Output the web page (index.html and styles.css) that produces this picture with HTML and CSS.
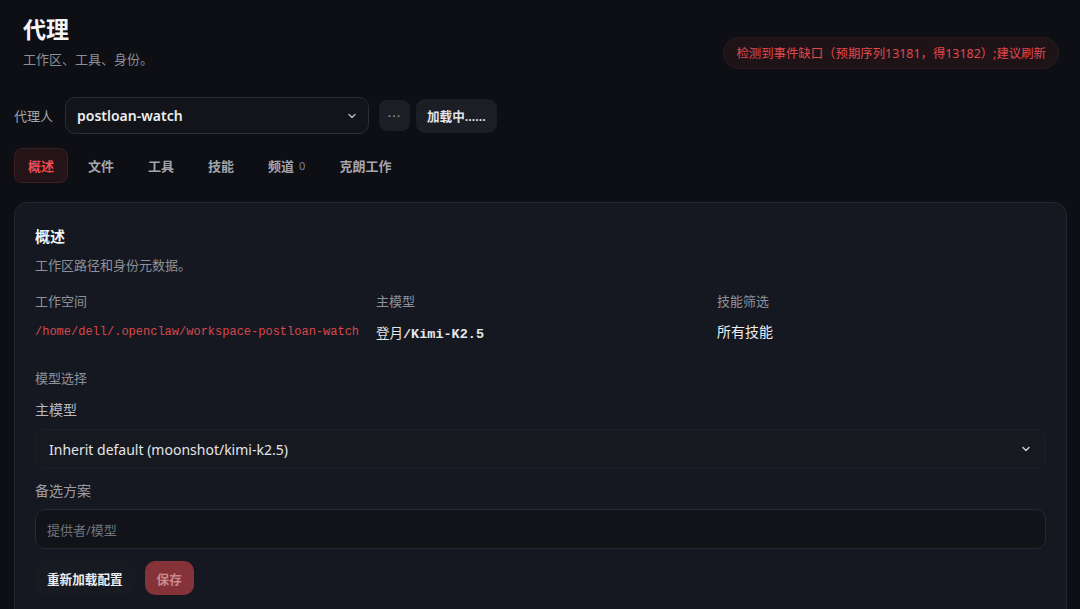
FILE: index.html
```html
<!DOCTYPE html>
<html lang="zh">
<head>
<meta charset="utf-8">
<link rel="stylesheet" href="styles.css">
</head>
<body>
<div class="page">
  <header class="head">
    <div class="head-text">
      <h1 class="title">代理</h1>
      <p class="subtitle">工作区、工具、身份。</p>
    </div>
    <div class="alert">检测到事件缺口（预期序列13181，得13182）;建议刷新</div>
  </header>

  <div class="agent-row">
    <span class="agent-label">代理人</span>
    <div class="agent-select">
      <span>postloan-watch</span>
      <svg class="chev" width="12" height="12" viewBox="0 0 12 12"><path d="M3 4.5 6 7.5 9 4.5" fill="none" stroke="#b8bbc2" stroke-width="1.4" stroke-linecap="round" stroke-linejoin="round"/></svg>
    </div>
    <button class="btn-more">···</button>
    <button class="btn-load">加载中……</button>
  </div>

  <nav class="tabs">
    <span class="tab active">概述</span>
    <span class="tab">文件</span>
    <span class="tab">工具</span>
    <span class="tab">技能</span>
    <span class="tab">频道 <small class="count">0</small></span>
    <span class="tab">克朗工作</span>
  </nav>

  <section class="card">
    <h2 class="card-title">概述</h2>
    <p class="card-sub">工作区路径和身份元数据。</p>
    <div class="meta">
      <div class="meta-item">
        <div class="meta-label">工作空间</div>
        <div class="meta-value path">/home/dell/.openclaw/workspace-postloan-watch</div>
      </div>
      <div class="meta-item">
        <div class="meta-label">主模型</div>
        <div class="meta-value mono"><span class="cjk">登月</span>/Kimi-K2.5</div>
      </div>
      <div class="meta-item">
        <div class="meta-label">技能筛选</div>
        <div class="meta-value plain">所有技能</div>
      </div>
    </div>

    <div class="section-label">模型选择</div>
    <div class="field-label">主模型</div>
    <div class="select">
      <span>Inherit default (moonshot/kimi-k2.5)</span>
      <svg class="chev" width="12" height="12" viewBox="0 0 12 12"><path d="M3 4.5 6 7.5 9 4.5" fill="none" stroke="#c8cbd2" stroke-width="1.5" stroke-linecap="round" stroke-linejoin="round"/></svg>
    </div>
    <div class="field-label muted">备选方案</div>
    <div class="input">提供者/模型</div>
    <div class="actions">
      <button class="btn-reload">重新加载配置</button>
      <button class="btn-save">保存</button>
    </div>
  </section>
</div>
</body>
</html>
```
FILE: styles.css
```css
* { box-sizing: border-box; }
html, body { margin: 0; padding: 0; }
body {
  background: #0e0f14;
  color: #e6e7ea;
  font-family: "Noto Sans", "Noto Sans CJK SC", sans-serif;
  width: 1080px;
  height: 609px;
  overflow: hidden;
}
.page {
  padding: 14px 13px 0 14px;
}
.head {
  display: flex;
  justify-content: space-between;
  align-items: flex-start;
  padding-left: 9px;
  padding-right: 8px;
}
.title {
  margin: 0;
  font-size: 23px;
  line-height: 30px;
  font-weight: 700;
  color: #f4f5f7;
}
.subtitle {
  margin: 6px 0 0;
  font-size: 13px;
  line-height: 18px;
  color: #8d9098;
}
.alert {
  margin-top: 23px;
  height: 32px;
  padding: 0 12px;
  display: flex;
  align-items: center;
  border-radius: 16px;
  background: #1e1417;
  border: 1px solid #2c1a1e;
  color: #e0484e;
  font-size: 12.4px;
}
.agent-row {
  margin-top: 28px;
  display: flex;
  align-items: center;
  gap: 10px;
}
.agent-label {
  font-size: 13px;
  color: #a4a7ae;
  margin-right: 2px;
}
.agent-select {
  width: 304px;
  height: 37px;
  border: 1px solid #2a2d35;
  border-radius: 10px;
  background: #121419;
  display: flex;
  align-items: center;
  justify-content: space-between;
  padding: 0 10px 0 11px;
  font-size: 14px;
  font-weight: 600;
  color: #eceef1;
}
.btn-more {
  width: 31px;
  height: 31px;
  border: none;
  border-radius: 8px;
  background: #1b1e25;
  color: #9a9da5;
  font-size: 13px;
  font-family: inherit;
  padding: 0;
  letter-spacing: 1px;
}
.btn-load {
  margin-left: -4px;
  height: 34px;
  padding: 0 11px;
  border: none;
  border-radius: 9px;
  background: #1b1e25;
  color: #e3e5e9;
  font-size: 12.6px;
  font-weight: 600;
  font-family: inherit;
}
.tabs {
  margin-top: 14px;
  display: flex;
  align-items: center;
  gap: 6px;
  height: 35px;
}
.tab {
  height: 35px;
  display: flex;
  align-items: center;
  padding: 0 13px;
  font-size: 13px;
  font-weight: 600;
  color: #a2a5ac;
  border: 1px solid transparent;
  border-radius: 8px;
}
.tab.active {
  color: #ef4b52;
  background: #241417;
  border-color: #3d1e23;
}
.count {
  font-size: 11px;
  font-weight: 400;
  color: #7e818a;
  margin-left: 5px;
}
.card {
  margin-top: 19px;
  background: #151820;
  border: 1px solid #23262e;
  border-radius: 13px;
  padding: 22px 20px 20px;
  height: 430px;
}
.card-title {
  margin: 0;
  font-size: 15px;
  line-height: 22px;
  font-weight: 700;
  color: #f2f3f5;
}
.card-sub {
  margin: 9px 0 0;
  font-size: 13px;
  line-height: 18px;
  color: #8e9199;
}
.meta {
  margin-top: 18px;
  display: grid;
  grid-template-columns: repeat(3, 1fr);
  column-gap: 12px;
}
.meta-label {
  font-size: 13px;
  line-height: 18px;
  color: #8e9199;
}
.meta-value {
  margin-top: 13px;
  line-height: 18px;
}
.path {
  font-family: "Liberation Mono", "DejaVu Sans Mono", monospace;
  font-size: 12px;
  color: #d8484d;
}
.mono {
  font-family: "Liberation Mono", "Noto Sans CJK SC", monospace;
  font-size: 13.5px;
  font-weight: 700;
  color: #e6e7ea;
}
.cjk {
  font-family: "Noto Sans CJK SC", sans-serif;
  font-weight: 400;
}
.plain {
  font-size: 14px;
  color: #eceef1;
}
.section-label {
  margin-top: 25px;
  font-size: 13px;
  line-height: 18px;
  color: #8e9199;
}
.field-label {
  margin-top: 14px;
  font-size: 14px;
  line-height: 18px;
  color: #b6b9c0;
}
.field-label.muted {
  margin-top: 13px;
  color: #9a9da5;
}
.select {
  margin-top: 10px;
  height: 40px;
  border: 1px solid #1d2028;
  border-radius: 10px;
  background: #161920;
  display: flex;
  align-items: center;
  justify-content: space-between;
  padding: 0 13px;
  font-size: 14px;
  color: #e3e5e9;
}
.input {
  margin-top: 9px;
  height: 40px;
  border: 1px solid #262932;
  border-radius: 10px;
  background: #111318;
  display: flex;
  align-items: center;
  padding: 0 11px;
  font-size: 13px;
  color: #6f727a;
}
.actions {
  margin-top: 12px;
  display: flex;
  gap: 10px;
}
.btn-reload {
  height: 34px;
  padding: 0 12px;
  border: none;
  border-radius: 9px;
  background: #171a21;
  color: #eceef1;
  font-size: 12.6px;
  font-weight: 700;
  font-family: inherit;
}
.btn-save {
  height: 34px;
  padding: 0 12px;
  border: none;
  border-radius: 10px;
  background: #853238;
  color: #c98a8e;
  font-size: 12.6px;
  font-weight: 600;
  font-family: inherit;
}
```
